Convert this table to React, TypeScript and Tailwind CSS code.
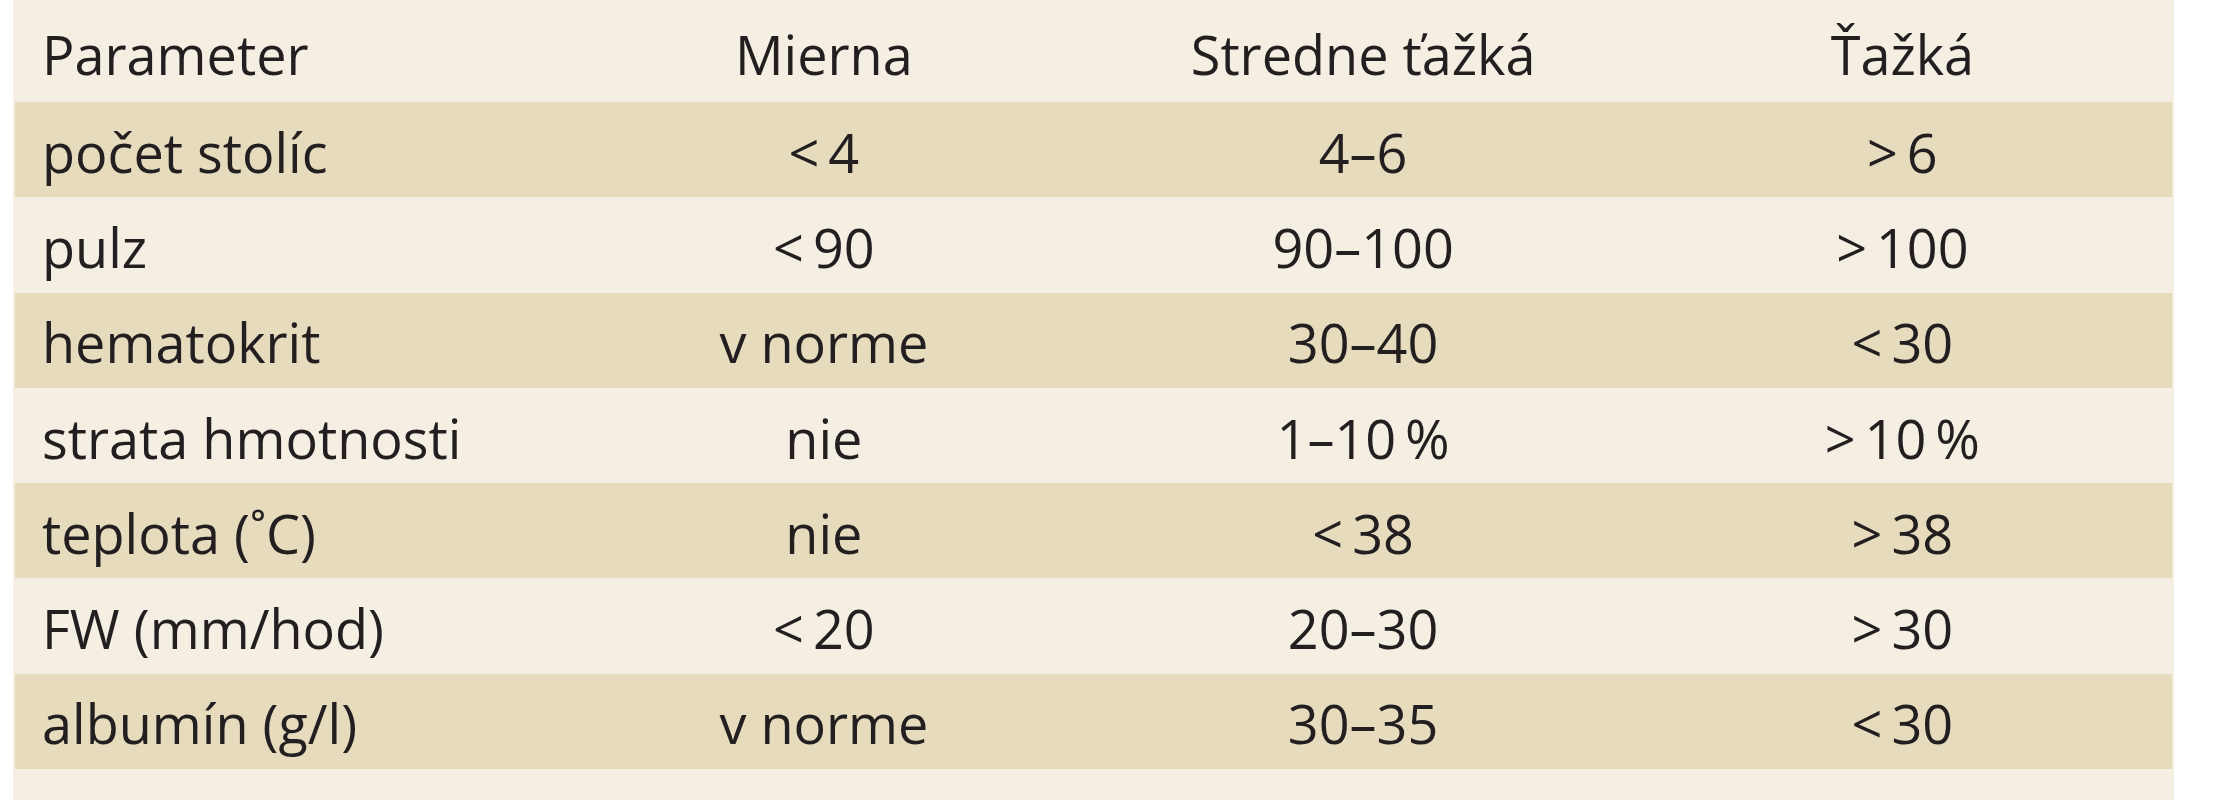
const header = ['Parameter', 'Mierna', 'Stredne ťažká', 'Ťažká']

const rows: string[][] = [
  ['počet stolíc', '<\u20094', '4–6', '>\u20096'],
  ['pulz', '<\u200990', '90–100', '>\u2009100'],
  ['hematokrit', 'v norme', '30–40', '<\u200930'],
  ['strata hmotnosti', 'nie', '1–10\u2009%', '>\u200910\u2009%'],
  ['teplota (˚C)', 'nie', '<\u200938', '>\u200938'],
  ['FW (mm/hod)', '<\u200920', '20–30', '>\u200930'],
  ['albumín (g/l)', 'v norme', '30–35', '<\u200930'],
]

function Row({ cells, shaded, tall }: { cells: string[]; shaded?: boolean; tall?: boolean }) {
  return (
    <div
      className={`grid grid-cols-4 items-center mx-[2px] ${tall ? 'h-[102px] pt-[6px]' : 'h-[95.3px] pt-[4px]'} ${
        shaded ? 'bg-[#e6dcbd]' : ''
      }`}
    >
      {cells.map((c, i) => (
        <div key={i} className={i === 0 ? 'pl-[27px] text-left' : 'text-center'}>
          {c}
        </div>
      ))}
    </div>
  )
}

export default function App() {
  return (
    <div className="w-[2226px] h-[800px] bg-white overflow-hidden">
      <div
        className="ml-[13px] w-[2161px] h-full bg-[#f4efe2] text-[#231f20] text-[54px] leading-none"
        style={{ fontFamily: '"Open Sans", "Noto Sans", sans-serif' }}
      >
        <Row cells={header} tall />
        {rows.map((r, i) => (
          <Row key={i} cells={r} shaded={i % 2 === 0} />
        ))}
      </div>
    </div>
  )
}
